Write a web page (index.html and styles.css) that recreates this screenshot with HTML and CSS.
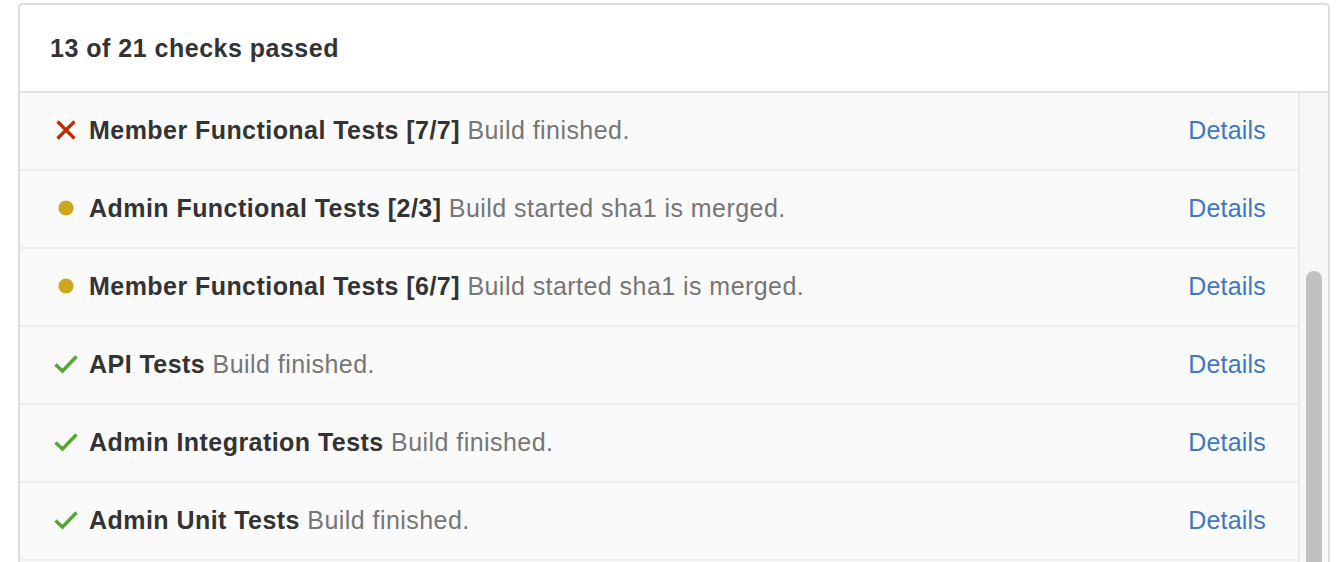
FILE: index.html
```html
<!DOCTYPE html>
<html>
<head>
<meta charset="utf-8">
<link rel="stylesheet" href="styles.css">
</head>
<body>
<div class="box">
  <div class="header">13 of 21 checks passed</div>
  <div class="body">
    <div class="list">
      <div class="row">
        <span class="icon"><svg width="22" height="22" viewBox="0 0 22 22"><path d="M2.5 2.5 L19.5 19.5 M19.5 2.5 L2.5 19.5" stroke="#bd2c00" stroke-width="3.2" fill="none"/></svg></span>
        <span class="text"><b>Member Functional Tests [7/7]</b> Build finished.</span>
        <a class="details">Details</a>
      </div>
      <div class="row">
        <span class="icon"><svg width="16" height="16" viewBox="0 0 16 16"><circle cx="8" cy="8" r="7.6" fill="#cea61b"/></svg></span>
        <span class="text"><b>Admin Functional Tests [2/3]</b> Build started sha1 is merged.</span>
        <a class="details">Details</a>
      </div>
      <div class="row">
        <span class="icon"><svg width="16" height="16" viewBox="0 0 16 16"><circle cx="8" cy="8" r="7.6" fill="#cea61b"/></svg></span>
        <span class="text"><b>Member Functional Tests [6/7]</b> Build started sha1 is merged.</span>
        <a class="details">Details</a>
      </div>
      <div class="row">
        <span class="icon"><svg width="24" height="20" viewBox="0 0 24 20"><path d="M1.5 10.5 L8.5 17 L22.5 2.5" stroke="#55a532" stroke-width="3.4" fill="none"/></svg></span>
        <span class="text"><b>API Tests</b> Build finished.</span>
        <a class="details">Details</a>
      </div>
      <div class="row">
        <span class="icon"><svg width="24" height="20" viewBox="0 0 24 20"><path d="M1.5 10.5 L8.5 17 L22.5 2.5" stroke="#55a532" stroke-width="3.4" fill="none"/></svg></span>
        <span class="text"><b>Admin Integration Tests</b> Build finished.</span>
        <a class="details">Details</a>
      </div>
      <div class="row">
        <span class="icon"><svg width="24" height="20" viewBox="0 0 24 20"><path d="M1.5 10.5 L8.5 17 L22.5 2.5" stroke="#55a532" stroke-width="3.4" fill="none"/></svg></span>
        <span class="text"><b>Admin Unit Tests</b> Build finished.</span>
        <a class="details">Details</a>
      </div>
    </div>
    <div class="track"><div class="thumb"></div></div>
  </div>
</div>
</body>
</html>
```
FILE: styles.css
```css
* { box-sizing: border-box; }
html, body { margin: 0; padding: 0; background: #fff; overflow: hidden; }
body {
  font-family: "Liberation Sans", Arial, sans-serif;
  color: #333;
  padding: 3px 12px 0 18px;
  height: 562px;
}
.box {
  border: 2px solid #ddd;
  border-bottom: none;
  border-radius: 5px 5px 0 0;
  height: 100%;
  display: flex;
  flex-direction: column;
}
.header {
  height: 88px;
  border-bottom: 2px solid #e1e1e1;
  padding-left: 30px;
  display: flex;
  align-items: center;
  font-size: 25px;
  font-weight: bold;
  letter-spacing: 0.5px;
  background: #fff;
  border-radius: 4px 4px 0 0;
}
.body {
  flex: 1;
  display: flex;
  background: #fafafa;
  min-height: 0;
}
.list {
  flex: 1;
  display: flex;
  flex-direction: column;
}
.row {
  height: 78px;
  flex: none;
  border-bottom: 2px solid #eeeeee;
  display: flex;
  align-items: center;
  padding: 0 32px 2px 34px;
  font-size: 25px;
  letter-spacing: 0.45px;
}
.icon {
  width: 24px;
  display: flex;
  justify-content: center;
  align-items: center;
  margin-right: 11px;
}
.text { flex: 1; color: #767676; white-space: nowrap; }
.text b { color: #333; }
.details { color: #4078c0; letter-spacing: 0.2px; }
.track {
  width: 30px;
  flex: none;
  border-left: 2px solid #ebebeb;
  background: #f7f7f7;
  padding: 178px 6px 0 6px;
  display: flex;
  flex-direction: column;
}
.thumb {
  flex: 1;
  background: #c1c1c1;
  border-radius: 8px 8px 0 0;
}
```
